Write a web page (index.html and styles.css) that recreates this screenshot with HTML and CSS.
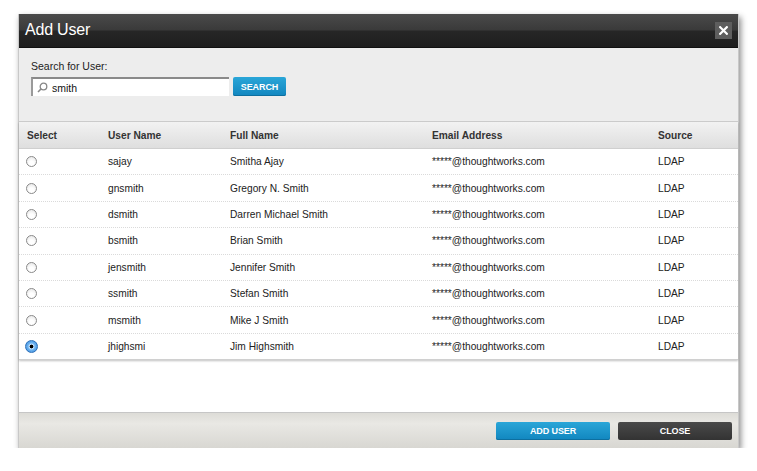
FILE: index.html
```html
<!DOCTYPE html>
<html>
<head>
<meta charset="utf-8">
<link rel="stylesheet" href="styles.css">
</head>
<body>
<div class="dialog">
  <div class="titlebar">
    <span class="title">Add User</span>
    <span class="close-x"><svg width="9" height="9" viewBox="0 0 9 9"><path d="M1.2 1.2 L7.8 7.8 M7.8 1.2 L1.2 7.8" stroke="#fff" stroke-width="2.2" stroke-linecap="square"/></svg></span>
  </div>
  <div class="search">
    <div class="search-label">Search for User:</div>
    <div class="search-row">
      <div class="input">
        <svg class="mag" width="11" height="11" viewBox="0 0 11 11"><circle cx="6.5" cy="4.5" r="3.3" fill="none" stroke="#888" stroke-width="1.3"/><path d="M4.2 6.8 L1 10" stroke="#888" stroke-width="1.6"/></svg>
        <span>smith</span>
      </div>
      <div class="btn btn-blue btn-search">SEARCH</div>
    </div>
  </div>
  <div class="table">
    <div class="row head">
      <div>Select</div><div>User Name</div><div>Full Name</div><div>Email Address</div><div>Source</div>
    </div>
    <div class="row"><div><span class="radio"></span></div><div>sajay</div><div>Smitha Ajay</div><div>*****@thoughtworks.com</div><div>LDAP</div></div>
    <div class="row"><div><span class="radio"></span></div><div>gnsmith</div><div>Gregory N. Smith</div><div>*****@thoughtworks.com</div><div>LDAP</div></div>
    <div class="row"><div><span class="radio"></span></div><div>dsmith</div><div>Darren Michael Smith</div><div>*****@thoughtworks.com</div><div>LDAP</div></div>
    <div class="row"><div><span class="radio"></span></div><div>bsmith</div><div>Brian Smith</div><div>*****@thoughtworks.com</div><div>LDAP</div></div>
    <div class="row"><div><span class="radio"></span></div><div>jensmith</div><div>Jennifer Smith</div><div>*****@thoughtworks.com</div><div>LDAP</div></div>
    <div class="row"><div><span class="radio"></span></div><div>ssmith</div><div>Stefan Smith</div><div>*****@thoughtworks.com</div><div>LDAP</div></div>
    <div class="row"><div><span class="radio"></span></div><div>msmith</div><div>Mike J Smith</div><div>*****@thoughtworks.com</div><div>LDAP</div></div>
    <div class="row last"><div><span class="radio on"></span></div><div>jhighsmi</div><div>Jim Highsmith</div><div>*****@thoughtworks.com</div><div>LDAP</div></div>
  </div>
  <div class="spacer"></div>
  <div class="footer">
    <div class="btn btn-blue btn-wide">ADD USER</div>
    <div class="btn btn-dark btn-wide">CLOSE</div>
  </div>
</div>
</body>
</html>
```

FILE: styles.css
```css
html, body {
  margin: 0;
  padding: 0;
  background: #fff;
}
body {
  font-family: "Liberation Sans", Arial, sans-serif;
  color: #222;
  padding: 14px 0 0 18px;
}
.dialog {
  width: 721px;
  height: 434px;
  display: flex;
  flex-direction: column;
  background: #fff;
  box-shadow: 2px 3px 6px rgba(0,0,0,0.45);
  border-left: 1px solid #c8c8c8;
  border-right: 1px solid #c8c8c8;
  box-sizing: border-box;
}
.titlebar {
  height: 33px;
  background: linear-gradient(#4a4a4a 0%, #3a3a3a 48%, #262626 52%, #1e1e1e 100%);
  display: flex;
  align-items: center;
  justify-content: space-between;
  padding: 0 6px 0 6px;
  flex: none;
  border-bottom: 1px solid #111;
}
.title {
  color: #fff;
  font-size: 16px;
  letter-spacing: -0.2px;
  margin-top: -2px;
}
.close-x {
  width: 17px;
  height: 17px;
  background: #5e5e5e;
  display: flex;
  align-items: center;
  justify-content: center;
  margin-top: -1px;
}
.search {
  height: 74px;
  background: #ededed;
  flex: none;
  padding: 12px 0 0 12px;
  box-sizing: border-box;
  border-bottom: 1px solid #cfcfcf;
}
.search-label {
  font-size: 10.5px;
  color: #222;
  margin-bottom: 5px;
}
.search-row {
  display: flex;
  gap: 4px;
}
.input {
  width: 198px;
  height: 19px;
  box-sizing: border-box;
  background: #fff;
  border-top: 2px solid #8a8a8a;
  border-left: 2px solid #9a9a9a;
  display: flex;
  align-items: center;
  gap: 4px;
  padding-left: 4px;
  font-size: 10.5px;
  color: #111;
}
.btn {
  display: flex;
  align-items: center;
  justify-content: center;
  color: #fff;
  font-size: 9px;
  font-weight: bold;
  border-radius: 2px;
  letter-spacing: -0.1px;
}
.btn-blue {
  background: linear-gradient(#2aa6d8, #1186bf);
  box-shadow: inset 0 -1px 0 #0d6f9f;
}
.btn-dark {
  background: linear-gradient(#4a4a4a, #333);
}
.btn-search {
  width: 53px;
  height: 19px;
}
.table {
  flex: none;
  box-shadow: 0 1px 2px rgba(0,0,0,0.25);
}
.row {
  display: grid;
  grid-template-columns: 89px 122px 202px 226px 1fr;
  height: 26.4px;
  box-sizing: border-box;
  align-items: center;
  font-size: 10.2px;
  color: #222;
  border-bottom: 1px dotted #dadada;
}
.row > div:first-child {
  padding-left: 7px;
}
.row.head {
  height: 27px;
  font-weight: bold;
  font-size: 10.2px;
  color: #333;
  background: linear-gradient(#f2f2f2, #dedede);
  border-bottom: 1px solid #cfcfcf;
}
.row.head > div:first-child {
  padding-left: 8px;
}
.row.last {
  border-bottom: 1px solid #d0d0d0;
}
.radio {
  display: block;
  width: 11px;
  height: 11px;
  border-radius: 50%;
  box-sizing: border-box;
  border: 1px solid #8a8a8a;
  background: radial-gradient(circle at 50% 70%, #fff 30%, #e2e2e2 100%);
}
.radio.on {
  width: 13px;
  height: 13px;
  margin-left: -1px;
  border: 1px solid #2c6fb8;
  background: radial-gradient(circle, #000 0 1.6px, #bfe0ff 2.2px, #6fb3ee 3.6px, #2f86dd 100%);
}
.spacer {
  flex: 1;
}
.footer {
  height: 36px;
  flex: none;
  background: linear-gradient(#dddcd7, #e9e8e4 30%, #d8d7d2);
  border-top: 1px solid #c6c6c6;
  box-sizing: border-box;
  display: flex;
  justify-content: flex-end;
  align-items: center;
  gap: 8px;
  padding: 0 6px 0 0;
}
.btn-wide {
  width: 114px;
  height: 18px;
}
```
